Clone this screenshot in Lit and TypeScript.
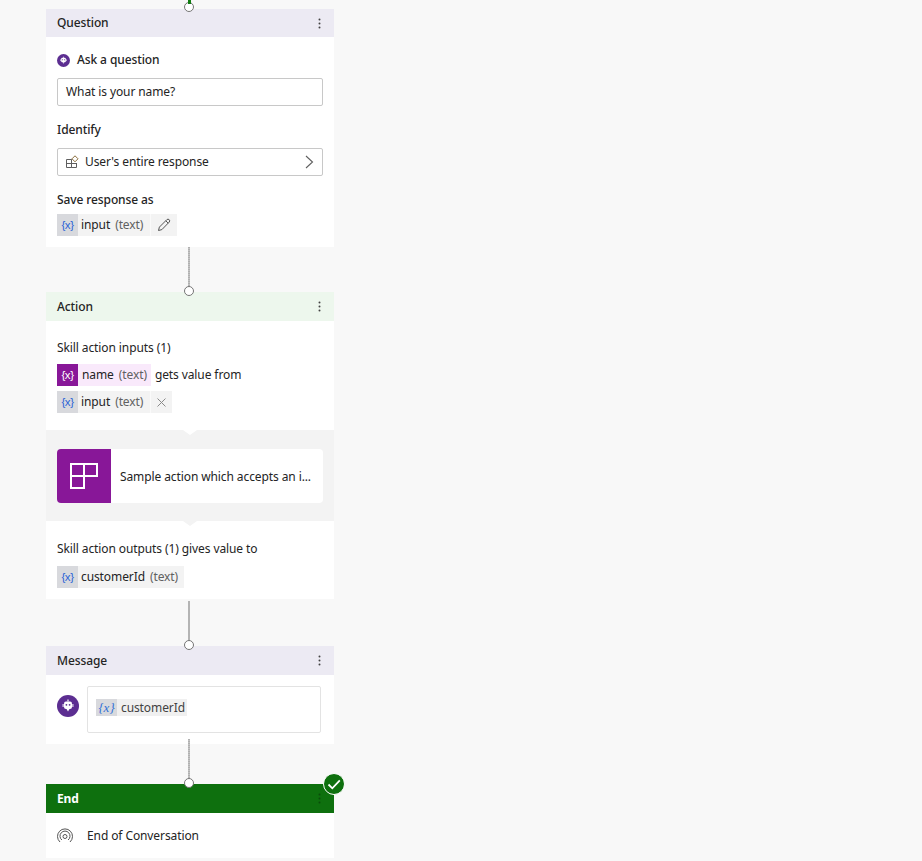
import { LitElement, html, css } from "lit";
import { customElement } from "lit/decorators.js";

const bot = (size: number) => html`<svg width=${size} height=${size} viewBox="0 0 22 22">
  <circle cx="11" cy="11" r="11" fill="#5c2e91"/>
  <path d="M11 4.6v2" stroke="#fff" stroke-width="1.2"/>
  <rect x="7" y="6.5" width="8" height="7.5" rx="2" fill="#fff"/>
  <rect x="5.6" y="9" width="1" height="3" fill="#fff"/><rect x="15.4" y="9" width="1" height="3" fill="#fff"/>
  <circle cx="9.4" cy="9.8" r=".9" fill="#5c2e91"/><circle cx="12.6" cy="9.8" r=".9" fill="#5c2e91"/>
  <path d="M9.5 14h3L11 16.5z" fill="#fff"/>
</svg>`;

const dots = html`<svg class="dots" width="3" height="11" viewBox="0 0 3 11"><circle cx="1.5" cy="1.5" r="1"/><circle cx="1.5" cy="5.5" r="1"/><circle cx="1.5" cy="9.5" r="1"/></svg>`;

@customElement("app-root")
export class AppRoot extends LitElement {
  static styles = css`
    :host { display: block; height: 861px; overflow: hidden; background: #f8f8f8; color: #242424;
      font-family: "Noto Sans", "Open Sans", sans-serif; font-size: 12px; letter-spacing: -0.1px; line-height: 16px; }
    .flow { width: 288px; margin-left: 46px; display: flex; flex-direction: column; align-items: stretch; }
    .top { height: 9px; position: relative; }
    .top i { position: absolute; left: 142px; top: 0; width: 3px; height: 4px; background: #107c10; z-index: 3; }
    .card { background: #fff; position: relative; }
    .head { height: 28px; display: flex; align-items: center; justify-content: space-between; padding: 0 13px 0 11px; font-weight: 500; }
    .dots { fill: #424242; }
    .q { background: #eceaf3; }
    .a { background: #edf7ed; height: 29px; }
    .m { background: #eceaf3; height: 29px; }
    .e { background: #0e700e; color: #fff; font-weight: 700; height: 29px; }
    .e .dots { fill: #0a4d0a; }
    .body { padding: 0 11px; display: flex; flex-direction: column; align-items: flex-start; }
    .q-body { height: 210px; }
    .ask { display: flex; align-items: center; gap: 7px; margin-top: 15px; font-weight: 500; }
    .field { box-sizing: border-box; width: 266px; height: 28px; border: 1px solid #c8c8c8; border-radius: 2px; display: flex; align-items: center; padding: 0 8px; background: #fff; }
    .ask + .field { margin-top: 10px; }
    .label { font-weight: 500; margin-top: 16px; margin-bottom: 10px; }
    .label.save { margin-top: 16px; margin-bottom: 6px; }
    .select { justify-content: space-between; padding-left: 7px; }
    .select span { display: flex; align-items: center; gap: 6px; }
    .chip { display: inline-flex; align-items: center; height: 22px; background: #f3f3f3; color: #242424; }
    .var { width: 21px; height: 22px; background: #d8d9dd; color: #2b63d6; display: flex; align-items: center; justify-content: center; font-family: "Liberation Sans", sans-serif; font-size: 11.5px; letter-spacing: -0.4px; flex: none; }
    .chip .txt { padding-left: 3px; }
    .chip .type { color: #616161; margin-left: 5px; }
    .act { height: 22px; display: flex; align-items: center; justify-content: center; border-left: 1px solid #fafafa; box-sizing: border-box; margin-left: 7px; }
    .act.pen { width: 27px; }
    .act.x { width: 22px; }
    .pad { padding-right: 6px; }
    .a-top { height: 109px; }
    .a-top .t1 { margin-top: 19px; margin-bottom: 8px; }
    .row { display: flex; align-items: center; gap: 4px; }
    .purple { background: #f9e9fb; }
    .purple .var { background: #881798; color: #fff; }
    .purple .txt { padding-left: 4px; }
    .purple .type { margin-right: 4px; }
    .mt5 { margin-top: 5px; }
    .band { height: 91px; background: #f3f3f3; padding: 19px 11px 0; box-sizing: border-box; position: relative; }
    .band::before, .after::before { content: ""; position: absolute; left: 137px; top: 0; border-left: 7px solid transparent; border-right: 7px solid transparent; border-top: 5px solid #fff; }
    .tile { height: 54px; background: #fff; border-radius: 4px; display: flex; align-items: center; overflow: hidden; }
    .tile .ico { width: 54px; height: 54px; background: #881798; display: flex; align-items: center; justify-content: center; flex: none; }
    .tile .name { padding: 2px 0 0 9px; white-space: nowrap; }
    .after { position: relative; height: 78px; padding: 20px 11px 0; box-sizing: border-box; }
    .after::before { border-top-color: #f3f3f3; }
    .after .t { margin-bottom: 9px; }
    .conn { position: relative; flex: none; }
    .conn i { position: absolute; left: 142px; top: 0; bottom: 4px; width: 2px; z-index: 1;
      background: repeating-linear-gradient(#b0b0b0 0 1px, #c4c4c4 1px 2px); }
    .c1 { height: 45px; } .c2 { height: 47px; } .c3 { height: 40px; }
    .c2 i { top: 2px; background: #b4b4b4; }
    .c3 i { top: -5px; }
    .node { position: absolute; left: 138px; width: 10px; height: 10px; box-sizing: border-box; border: 1.2px solid #757575; border-radius: 50%; background: #fff; z-index: 2; }
    .conn .node { bottom: -4px; }
    .top .node { bottom: -3px; }
    .msg { height: 69px; display: flex; padding: 11px 13px 0 11px; gap: 8px; box-sizing: border-box; }
    .msg svg { margin-top: 9px; flex: none; }
    .box { width: 234px; height: 47px; box-sizing: border-box; border: 1px solid #e3e3e3; border-radius: 2px; padding: 12px 8px; }
    .small { height: 17px; background: #f0f0f0; }
    .small .var { height: 17px; width: 21px; font-family: "Liberation Serif", serif; font-style: italic; font-size: 13px; letter-spacing: 0; color: #2f6fd6; }
    .small .txt { padding-left: 4px; padding-right: 2px; color: #424242; }
    .end-body { height: 45px; display: flex; align-items: center; padding-left: 11px; gap: 14px; }
    .end-body svg { flex: none; }
    .check { position: absolute; right: -11px; top: -11px; width: 22px; height: 22px; z-index: 3; }
  `;

  render() {
    const X = html`<span>{x}</span>`;
    return html`<div class="flow">
      <div class="top"><i></i><b class="node"></b></div>
      <section class="card">
        <div class="head q">Question ${dots}</div>
        <div class="body q-body">
          <div class="ask">${bot(13)}Ask a question</div>
          <div class="field">What is your name?</div>
          <div class="label">Identify</div>
          <div class="field select">
            <span><svg width="14" height="14" viewBox="0 0 14 14" fill="none" stroke="#5f5f5f" stroke-width="1"><path d="M1.5 4.5h5v8h-5zM6.5 4.5v8h5V8M1.5 8.5h10"/><path d="M10 .8l3 3-3 3-3-3z" stroke="#8a6d3b"/></svg>User's entire response</span>
            <svg width="10" height="14" viewBox="0 0 10 14" fill="none" stroke="#5f5f5f" stroke-width="1.1"><path d="M2 1l6.5 6L2 13"/></svg>
          </div>
          <div class="label save">Save response as</div>
          <div class="chip"><span class="var">${X}</span><span class="txt">input</span><span class="type">(text)</span>
            <span class="act pen"><svg width="14" height="14" viewBox="0 0 14 14" fill="none" stroke="#555" stroke-width="1"><path d="M1.5 12.5l.9-3.4L9.8 1.7a1.6 1.6 0 0 1 2.4 2.4L4.9 11.6z M8.8 2.8l2.4 2.4"/></svg></span></div>
        </div>
      </section>
      <div class="conn c1"><i></i><b class="node"></b></div>
      <section class="card">
        <div class="head a">Action ${dots}</div>
        <div class="body a-top">
          <div class="t1">Skill action inputs (1)</div>
          <div class="row"><div class="chip purple"><span class="var">${X}</span><span class="txt">name</span><span class="type">(text)</span></div>gets value from</div>
          <div class="chip mt5"><span class="var">${X}</span><span class="txt">input</span><span class="type">(text)</span>
            <span class="act x"><svg width="9" height="9" viewBox="0 0 9 9" stroke="#8a8a8a" stroke-width="1"><path d="M.5.5l8 8M8.5.5l-8 8"/></svg></span></div>
        </div>
        <div class="band"><div class="tile">
          <div class="ico"><svg width="28" height="26" viewBox="0 0 28 26" fill="none" stroke="#fff" stroke-width="2"><path d="M1 1h13v12H1zM14 1h13v12H14zM1 13h13v12H1z"/></svg></div>
          <div class="name">Sample action which accepts an i...</div>
        </div></div>
        <div class="after">
          <div class="t">Skill action outputs (1) gives value to</div>
          <div class="chip pad"><span class="var">${X}</span><span class="txt">customerId</span><span class="type">(text)</span></div>
        </div>
      </section>
      <div class="conn c2"><i></i><b class="node"></b></div>
      <section class="card">
        <div class="head m">Message ${dots}</div>
        <div class="msg">${bot(22)}
          <div class="box"><span class="chip small"><span class="var">{x}</span><span class="txt">customerId</span></span></div>
        </div>
      </section>
      <div class="conn c3"><i></i><b class="node"></b></div>
      <section class="card">
        <svg class="check" viewBox="0 0 22 22"><circle cx="11" cy="11" r="10.5" fill="#0e700e" stroke="#fff"/><path d="M5.5 11.5l3.8 3.8L16.8 7.3" fill="none" stroke="#fff" stroke-width="1.8"/></svg>
        <div class="head e">End ${dots}</div>
        <div class="end-body">
          <svg width="16" height="16" viewBox="0 0 16 16" fill="none" stroke="#555" stroke-width="1"><path d="M3 14a7.5 7.5 0 1 1 10 0M4.9 12a5 5 0 1 1 6.2 0"/><circle cx="8" cy="8.5" r="2"/></svg>
          End of Conversation
        </div>
      </section>
    </div>`;
  }
}
